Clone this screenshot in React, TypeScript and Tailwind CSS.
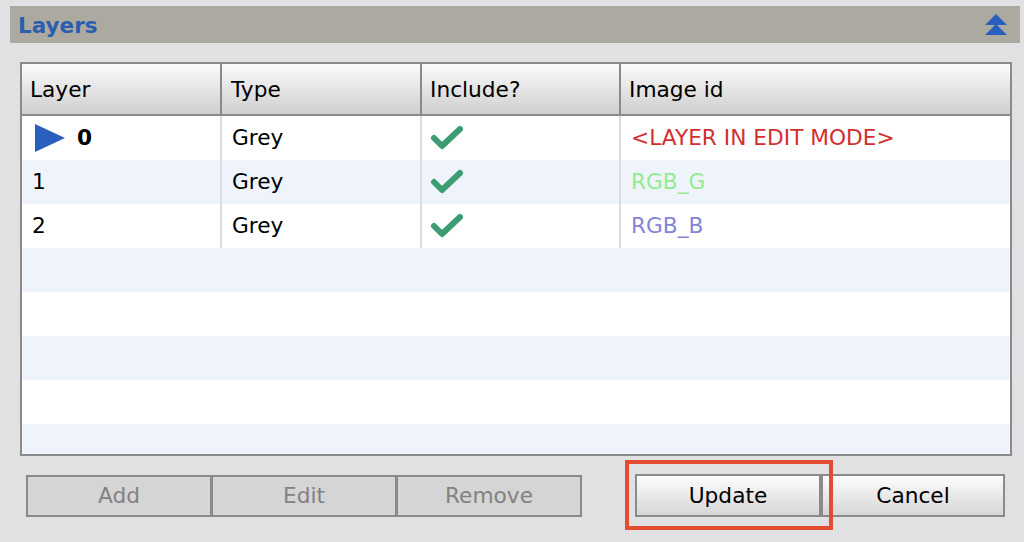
import React from "react";

interface LayerRow {
  id: string;
  type: string;
  include: boolean;
  imageId: string;
  imageClass: string;
  active?: boolean;
}

const rows: LayerRow[] = [
  { id: "0", type: "Grey", include: true, imageId: "<LAYER IN EDIT MODE>", imageClass: "text-[#d42f2f]", active: true },
  { id: "1", type: "Grey", include: true, imageId: "RGB_G", imageClass: "text-[#8fec8f]" },
  { id: "2", type: "Grey", include: true, imageId: "RGB_B", imageClass: "text-[#8585d6]" },
];

const CheckMark = () => (
  <svg width="34" height="26" viewBox="0 0 34 26">
    <polyline
      points="4,13 12,21 30,4"
      fill="none"
      stroke="#3d9d72"
      strokeWidth="6"
      strokeLinecap="round"
      strokeLinejoin="round"
    />
  </svg>
);

const CollapseIcon = () => (
  <svg width="22" height="22" viewBox="0 0 22 22">
    <polygon points="11,0 22,11 0,11" fill="#2a5fbf" />
    <polygon points="11,10 22,21 0,21" fill="#2a5fbf" />
  </svg>
);

const App: React.FC = () => {
  const emptyRows = [0, 1, 2, 3, 4];

  return (
    <div
      className="w-full h-[542px] overflow-hidden bg-[#e1e1e3] pt-[6px] pl-[10px] pr-[4px] text-[21.7px]"
      style={{ fontFamily: '"DejaVu Sans", Verdana, sans-serif' }}
    >
      {/* Title bar */}
      <div className="h-[37px] bg-[#aca9a1] flex items-center justify-between pl-[8px] pr-[13px]">
        <span className="font-bold text-[#2b5fae] leading-none pt-[3px] text-[21.5px]">Layers</span>
        <CollapseIcon />
      </div>

      {/* Table */}
      <div className="ml-[10px] mt-[19px] w-[992px] h-[394px] border-2 border-[#8a8a8a] bg-white overflow-hidden">
        <div className="flex h-[52px] border-b-2 border-[#8a8a8a] bg-gradient-to-b from-[#fbfbfb] to-[#cfcfcf] text-black">
          <div className="w-[200px] border-r-2 border-[#8a8a8a] flex items-center pl-[8px] pt-[2px]">Layer</div>
          <div className="w-[200px] border-r-2 border-[#8a8a8a] flex items-center pl-[9px] pt-[2px]">Type</div>
          <div className="w-[199px] border-r-2 border-[#8a8a8a] flex items-center pl-[8px] pt-[2px]">Include?</div>
          <div className="flex-1 flex items-center pl-[8px] pt-[2px]">Image id</div>
        </div>

        {rows.map((row, i) => (
          <div
            key={row.id}
            className={`flex h-[44px] ${i % 2 === 1 ? "bg-[#eff4fc]" : "bg-white"}`}
          >
            <div className="w-[200px] border-r-2 border-[#dcdcdc] flex items-center pl-[10px]">
              {row.active ? (
                <>
                  <svg width="30" height="28" viewBox="0 0 30 28" className="mr-[12px] ml-[3px]">
                    <polygon points="0,0 30,14 0,28" fill="#2a5fbf" />
                  </svg>
                  <span className="font-bold">{row.id}</span>
                </>
              ) : (
                <span>{row.id}</span>
              )}
            </div>
            <div className="w-[200px] border-r-2 border-[#dcdcdc] flex items-center pl-[10px]">
              {row.type}
            </div>
            <div className="w-[199px] border-r-2 border-[#dcdcdc] flex items-center pl-[8px]">
              {row.include && <CheckMark />}
            </div>
            <div className={`flex-1 flex items-center pl-[10px] ${row.imageClass}`}>
              {row.imageId}
            </div>
          </div>
        ))}

        {emptyRows.map((n) => (
          <div
            key={n}
            className={`h-[44px] ${(n + rows.length) % 2 === 1 ? "bg-[#eff4fc]" : "bg-white"}`}
          />
        ))}
      </div>

      {/* Buttons */}
      <div className="flex items-center mt-[18px] ml-[16px]">
        <div className="flex">
          {["Add", "Edit", "Remove"].map((label) => (
            <button
              key={label}
              disabled
              className="w-[186px] h-[42px] border-2 border-[#8a8a8a] bg-[#d5d5d5] text-[#828282] -ml-[1px] first:ml-0 pt-[1px]"
            >
              {label}
            </button>
          ))}
        </div>

        <div className="flex ml-[53px]">
          <div className="relative">
            <button className="w-[186px] h-[43px] border-2 border-[#8a8a8a] bg-gradient-to-b from-[#fdfdfd] to-[#d6d6d6] text-black pt-[1px]">
              Update
            </button>
            <div className="absolute -left-[10px] -top-[14px] w-[208px] h-[70px] border-4 border-[#e44c30] pointer-events-none" />
          </div>
          <button className="w-[184px] h-[43px] border-2 border-[#8a8a8a] bg-gradient-to-b from-[#fdfdfd] to-[#d6d6d6] text-black pt-[1px]">
            Cancel
          </button>
        </div>
      </div>
    </div>
  );
};

export default App;
